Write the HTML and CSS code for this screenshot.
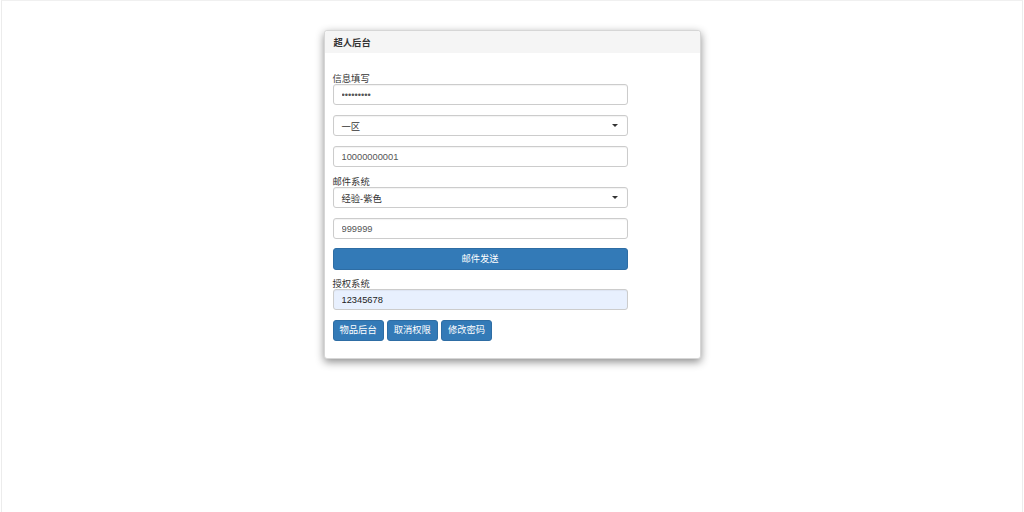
FILE: index.html
```html
<!DOCTYPE html>
<html lang="zh">
<head>
<meta charset="utf-8">
<title>超人后台</title>
<link rel="stylesheet" href="styles.css">
</head>
<body>
<div class="page">
  <div class="panel">
    <div class="panel-heading">超人后台</div>
    <div class="panel-body">
      <form class="form">
        <label class="label">信息填写</label>
        <input class="control" type="password" value="123456789">
        <div class="control select"><span>一区</span><span class="caret"></span></div>
        <input class="control" type="text" value="10000000001">
        <label class="label">邮件系统</label>
        <div class="control select"><span>经验-紫色</span><span class="caret"></span></div>
        <input class="control" type="text" value="999999">
        <button class="btn btn-block" type="button">邮件发送</button>
        <label class="label">授权系统</label>
        <input class="control autofill" type="text" value="12345678">
        <div class="btn-row">
          <button class="btn" type="button">物品后台</button>
          <button class="btn" type="button">取消权限</button>
          <button class="btn" type="button">修改密码</button>
        </div>
      </form>
    </div>
  </div>
</div>
</body>
</html>
```

FILE: styles.css
```css
html, body {
  margin: 0;
  padding: 0;
  height: 100%;
}
body {
  font-family: "Liberation Sans", Arial, "Noto Sans CJK SC", sans-serif;
  font-size: 9.3px;
  color: #333;
  background: #fff;
}
.page {
  box-sizing: border-box;
  height: 512px;
  margin: 0 1px;
  border-left: 1px solid #ececec;
  border-right: 1px solid #ececec;
  border-top: 1px solid #f0f0f0;
  padding-top: 29px;
}
.panel {
  width: 377px;
  margin: 0 auto;
  box-sizing: border-box;
  background: #fff;
  border: 1px solid #d6d6d6;
  border-radius: 3px;
  box-shadow: 0 3px 8px rgba(0, 0, 0, 0.45);
}
.panel-heading {
  height: 22px;
  line-height: 24px;
  padding: 0 9px;
  background: #f5f5f5;
  font-weight: bold;
  color: #333;
  border-radius: 3px 3px 0 0;
}
.panel-body {
  padding: 21px 8px 17px;
}
.form {
  width: 295px;
  display: flex;
  flex-direction: column;
}
.label {
  display: block;
  line-height: 10px;
  height: 10px;
  color: #333;
}
.control {
  box-sizing: border-box;
  height: 21px;
  width: 100%;
  margin: 0 0 10px;
  padding: 0 8px;
  border: 1px solid #ccc;
  border-radius: 3px;
  background: #fff;
  font-family: inherit;
  font-size: 9.3px;
  color: #555;
  box-shadow: inset 0 1px 1px rgba(0, 0, 0, 0.05);
  outline: none;
}
.select {
  display: flex;
  align-items: center;
  justify-content: space-between;
  color: #333;
}
.caret {
  width: 0;
  height: 0;
  margin-right: 1px;
  border-left: 3px solid transparent;
  border-right: 3px solid transparent;
  border-top: 3px solid #333;
}
.autofill {
  background: #e8f0fe;
  color: #222;
}
.btn {
  box-sizing: border-box;
  height: 21px;
  padding: 0 6px;
  border: 1px solid #2e6da4;
  border-radius: 3px;
  background: #337ab7;
  color: #fff;
  font-family: inherit;
  font-size: 9.3px;
  line-height: 19px;
}
.btn-block {
  width: 100%;
  height: 22px;
  margin: -1px 0 9px;
}
.btn-row {
  display: flex;
  gap: 3px;
}
```
